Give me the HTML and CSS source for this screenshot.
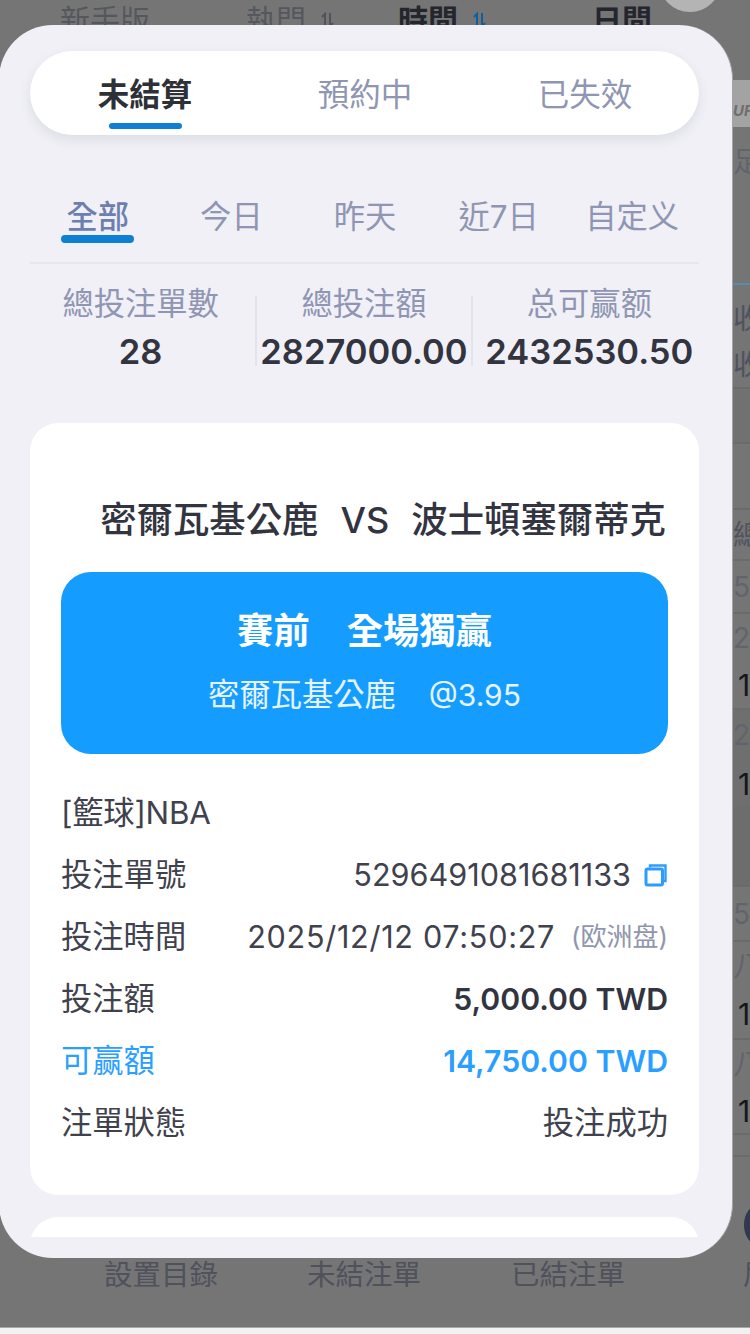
FILE: index.html
```html
<!DOCTYPE html>
<html lang="zh-Hant">
<head>
<meta charset="utf-8">
<title>注單</title>
<link rel="stylesheet" href="styles.css">
</head>
<body>
<div class="screen">
  <div class="backdrop">
    <nav class="topnav">
      <span class="nav-item nav-a">新手版</span>
      <span class="nav-item nav-b">執門<svg class="sort" viewBox="0 0 16 18"><path d="M5 16V3L2 6M10 2v13l3-3" fill="none" stroke="#50525c" stroke-width="2"/></svg></span>
      <span class="nav-item nav-c strong">時間<svg class="sort" viewBox="0 0 16 18"><path d="M5 16V3L2 6M10 2v13l3-3" fill="none" stroke="#0f5f9c" stroke-width="2"/></svg></span>
      <span class="nav-item nav-d strong">日間</span>
      <span class="avatar"></span>
    </nav>
    <div class="side">
      <div class="s h-ufc"><span class="ufc">UFC</span></div>
      <div class="s h-foot faint">足</div>
      <div class="s h-gap1"></div>
      <div class="s h-shou line-blue faint2">收</div>
      <div class="s h-shou2 faint2">收</div>
      <div class="s h-empty line"></div>
      <div class="s h-empty2 line"></div>
      <div class="s h-zong line faint2">總</div>
      <div class="s h-five line faint">5</div>
      <div class="s h-two line faint">2</div>
      <div class="s h-one dark">1</div>
      <div class="s h-two2 line faint band">2</div>
      <div class="s h-one2 dark band">1</div>
      <div class="s h-gap2 shade"></div>
      <div class="s h-five2 line faint">5</div>
      <div class="s h-row line faint">八</div>
      <div class="s h-one3 dark">1</div>
      <div class="s h-row2 line faint">八</div>
      <div class="s h-one4 dark">1</div>
      <div class="s h-rest line"></div>
      <div class="s h-rest2 line"></div>
      <div class="s h-dot"><span class="dot"></span></div>
    </div>
    <footer class="foot">
      <span class="foot-a">設置目錄</span>
      <span class="foot-b">未結注單</span>
      <span class="foot-c">已結注單</span>
      <span class="foot-d">眉</span>
    </footer>
  </div>

  <section class="modal">
    <div class="pill">
      <div class="tab active">未結算<i class="tab-bar"></i></div>
      <div class="tab">預約中</div>
      <div class="tab">已失效</div>
    </div>

    <div class="subtabs">
      <div class="sub active">全部<i class="sub-bar"></i></div>
      <div class="sub">今日</div>
      <div class="sub">昨天</div>
      <div class="sub">近7日</div>
      <div class="sub">自定义</div>
    </div>

    <div class="stats">
      <div class="stat stat-1"><div class="stat-label">總投注單數</div><div class="stat-num">28</div></div>
      <i class="stat-sep"></i>
      <div class="stat stat-2"><div class="stat-label">總投注額</div><div class="stat-num">2827000.00</div></div>
      <i class="stat-sep"></i>
      <div class="stat stat-3"><div class="stat-label">总可赢额</div><div class="stat-num">2432530.50</div></div>
    </div>

    <div class="list">
      <article class="card">
        <h2 class="match"><span>密爾瓦基公鹿</span><span class="vs">VS</span><span>波士頓塞爾蒂克</span></h2>
        <div class="bet">
          <div class="bet-title"><span>賽前</span><span>全場獨贏</span></div>
          <div class="bet-sub"><span>密爾瓦基公鹿</span><span class="odds">@3.95</span></div>
        </div>
        <div class="rows">
          <div class="row tag">[籃球]NBA</div>
          <div class="row"><span>投注單號</span><span class="val">5296491081681133<svg class="copy" viewBox="0 0 24 24"><path d="M6 4.500V2.500h15.500v15.500h-2" fill="none" stroke="#2b9dff" stroke-width="2.400"/><rect x="2" y="6" width="16.500" height="16" rx="1.500" fill="none" stroke="#2b9dff" stroke-width="3"/></svg></span></div>
          <div class="row"><span>投注時間</span><span class="val"><span class="date">2025/12/12 07:50:27</span><small class="market">(欧洲盘)</small></span></div>
          <div class="row"><span>投注額</span><span class="val medium">5,000.00 TWD</span></div>
          <div class="row win"><span>可赢額</span><span class="val medium">14,750.00 TWD</span></div>
          <div class="row"><span>注單狀態</span><span class="val cjk">投注成功</span></div>
        </div>
      </article>
      <article class="card"></article>
    </div>
  </section>
</div>
</body>
</html>
```
FILE: styles.css
```css
* { box-sizing: border-box; }
html, body { margin: 0; padding: 0; }
body {
  width: 750px;
  height: 1334px;
  overflow: hidden;
  background: #f2f2f2;
  font-family: Inter, "Noto Sans CJK TC", sans-serif;
  color: #3b3e4a;
}
.screen { position: relative; width: 750px; height: 1334px; overflow: hidden; }

/* dimmed page behind the sheet */
.backdrop {
  display: flex;
  flex-direction: column;
  height: 1328px;
  background: #757575;
  border-bottom: 1px solid #a8a8a8;
}
.topnav {
  display: flex;
  flex: none;
  height: 40px;
  padding-left: 60px;
  font-size: 30px;
  line-height: 40px;
  color: #55575f;
}
.nav-item { flex: none; display: flex; align-items: center; }
.nav-b { margin-left: 96px; }
.nav-c { margin-left: 62px; }
.nav-d { margin-left: 104px; }
.strong { color: #24262e; font-weight: 700; }
.sort { width: 16px; height: 18px; margin-left: 14px; }
.avatar {
  flex: none;
  width: 62px;
  height: 62px;
  margin: -50px 0 0 7px;
  border-radius: 50%;
  background: #b4b4b4;
}
.side { flex: 1; min-height: 0; padding-left: 735px; width: 750px; overflow: hidden; }
.s { width: 40px; margin-left: -2px; font-size: 28px; line-height: 32px; display: flex; align-items: center; white-space: nowrap; }
.faint { color: #62646c; }
.faint2 { color: #50525e; }
.dark { color: #16171c; padding-left: 5px; font-size: 30px; }
.line { border-top: 2px solid #6b6b6b; }
.line-blue { border-top: 2px solid #5a8ab0; }
.band { background: #6f6f6f; }
.shade { background: #6d6d6d; }
.h-ufc { height: 87px; align-items: flex-end; }
.ufc {
  width: 40px;
  height: 47px;
  padding-top: 20px;
  font-size: 15px;
  line-height: 22px;
  font-weight: 700;
  font-style: italic;
  color: #6e6e6e;
  background: #a3a3a3;
}
.h-foot { height: 70px; }
.h-gap1 { height: 86px; }
.h-shou { height: 60px; padding-top: 10px; }
.h-shou2 { height: 44px; }
.h-empty { height: 55px; background: #717171; }
.h-empty2 { height: 66px; }
.h-zong { height: 51px; }
.h-five { height: 53px; }
.h-two { height: 50px; }
.h-one { height: 46px; }
.h-two2 { height: 52px; }
.h-one2 { height: 47px; }
.h-gap2 { height: 78px; }
.h-five2 { height: 55px; }
.h-row { height: 50px; }
.h-one3 { height: 48px; }
.h-row2 { height: 50px; }
.h-one4 { height: 45px; }
.h-rest { height: 22px; }
.h-rest2 { height: 50px; }
.h-dot { height: 40px; }
.dot { width: 40px; height: 40px; margin-left: 11px; border-radius: 50%; background: #33374f; }

.foot {
  flex: none;
  display: flex;
  height: 30px;
  margin-top: auto;
  margin-bottom: 37px;
  padding-left: 104px;
  font-size: 28.500px;
  line-height: 30px;
  color: #4f515d;
  white-space: nowrap;
}
.foot-b { margin-left: 89px; }
.foot-c { margin-left: 90px; }
.foot-d { margin-left: 118px; }

/* sheet */
.modal {
  position: absolute;
  left: -1px;
  top: 25px;
  width: 734px;
  height: 1233px;
  padding: 26px 33px 21px 31px;
  display: flex;
  flex-direction: column;
  background: #f0f0f6;
  border-radius: 54px;
  border-right: 1px solid #a4a4a8;
}
.pill {
  flex: none;
  display: grid;
  grid-template-columns: repeat(3, 220px);
  height: 84px;
  padding: 22px 5px 0;
  background: #fff;
  border-radius: 42px;
  box-shadow: 0 5px 12px rgba(60, 60, 90, .1);
}
.tab {
  display: flex;
  flex-direction: column;
  align-items: center;
  font-size: 31.500px;
  line-height: 44px;
  color: #8f96b3;
}
.tab.active { color: #2e3038; font-weight: 700; }
.tab-bar {
  width: 73px;
  height: 6px;
  margin-top: 6px;
  border-radius: 3px;
  background: #0f7fd4;
}
.subtabs {
  flex: none;
  display: grid;
  grid-template-columns: repeat(5, 1fr);
  margin-top: 64px;
  height: 65px;
  padding: 0 0 0 1px;
  border-bottom: 2px solid #e6e6ee;
}
.sub {
  display: flex;
  flex-direction: column;
  align-items: center;
  font-size: 31.300px;
  line-height: 36px;
  color: #8f96b3;
  white-space: nowrap;
}
.sub.active { color: #6b80b0; font-weight: 500; }
.sub-bar {
  width: 73px;
  height: 8px;
  border-radius: 4px;
  background: #0f7fd4;
}
.stats {
  flex: none;
  display: flex;
  align-items: center;
  margin-top: 18px;
  height: 96px;
}
.stat { text-align: center; white-space: nowrap; }
.stat-1 { width: 226px; padding-right: 4px; }
.stat-2 { width: 214px; }
.stat-3 { width: 227px; padding-left: 7px; }
.stat-sep { flex: none; width: 2px; height: 70px; margin-top: 2px; background: #e3e3eb; }
.stat-label { font-size: 31.300px; line-height: 40px; color: #8f96b3; }
.stat-num {
  margin-top: 3px;
  font-size: 34.500px;
  line-height: 50px;
  font-weight: 600;
  color: #32343f;
}
.list { flex: 1; min-height: 0; margin-top: 45px; overflow: hidden; }
.card {
  margin-bottom: 22px;
  padding: 72px 31px 41px;
  background: #fff;
  border-radius: 28px;
}
.match {
  display: flex;
  justify-content: flex-end;
  gap: 22px;
  margin: 0;
  padding-right: 2px;
  font-size: 36.400px;
  line-height: 50px;
  font-weight: 500;
  color: #32343f;
}
.vs { font-size: 36px; font-weight: 500; }
.bet {
  margin-top: 27px;
  height: 182px;
  padding-top: 34px;
  background: #159cff;
  border-radius: 30px;
  color: #fff;
}
.bet-title { display: flex; justify-content: center; gap: 37px; font-size: 36.300px; line-height: 50px; font-weight: 700; }
.bet-sub { display: flex; justify-content: center; gap: 33px; margin-top: 17px; font-size: 31.300px; line-height: 44px; color: #e6f4ff; }
.odds { font-size: 30px; }
.rows { margin-top: 28px; }
.row {
  display: flex;
  justify-content: space-between;
  align-items: center;
  height: 62px;
  font-size: 31.300px;
  line-height: 40px;
  color: #3f424d;
}
.tag { justify-content: flex-start; letter-spacing: -.2px; }
.val { display: flex; align-items: center; font-size: 30.600px; white-space: nowrap; }
.date { letter-spacing: .7px; }
.cjk { font-size: 31.300px; }
.medium {
  font-size: 30.200px;
  font-weight: 600;
  color: #32343f;
}
.win { color: #2b9fff; }
.win .medium { color: #2b9fff; }
.copy { flex: none; width: 24px; height: 24px; margin-left: 13px; }
.market { margin-left: 16px; font-size: 26px; color: #8f96ad; }
```
